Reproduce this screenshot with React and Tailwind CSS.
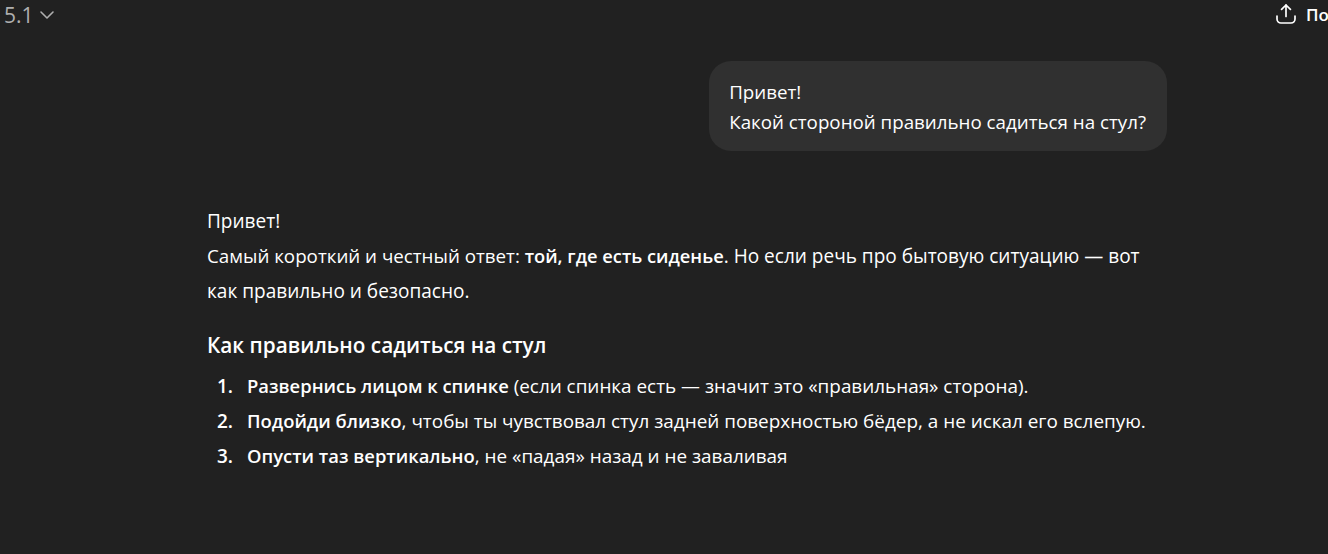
import React from 'react';
import { ChevronDown } from 'lucide-react';

const font = "font-['Open_Sans','Noto_Sans',sans-serif]";

const ShareIcon = () => (
  <svg className="mb-[3px]" width="20" height="20" viewBox="0 0 20 20" fill="none" stroke="currentColor" strokeWidth="1.7" strokeLinecap="round" strokeLinejoin="round">
    <path d="M10 12.5V1.2" />
    <path d="M5.6 5.4 10 1l4.4 4.4" />
    <path d="M1 12v3a4 4 0 0 0 4 4h10a4 4 0 0 0 4-4v-3" />
  </svg>
);

const steps = [
  ['Развернись лицом к спинке', ' (если спинка есть — значит это «правильная» сторона).'],
  ['Подойди близко', ', чтобы ты чувствовал стул задней поверхностью бёдер, а не искал его вслепую.'],
  ['Опусти таз вертикально', ', не «падая» назад и не заваливая'],
];

export default function App() {
  return (
    <div className={`w-[1328px] h-[554px] overflow-hidden bg-[#212121] text-white ${font}`}>
      {/* Top bar */}
      <header className="h-[30px] flex items-center justify-between pl-[4px] -mr-[30px]">
        <div className="flex items-center gap-[1px] text-[#afafaf]">
          <span className="text-[21px] leading-[28px]">5.1</span>
          <ChevronDown size={24} strokeWidth={1.6} />
        </div>
        <div className="flex items-center gap-[10px]">
          <ShareIcon />
          <span className="text-[17px] font-semibold leading-[28px] w-[52px] whitespace-nowrap">Поделиться</span>
        </div>
      </header>

      <main className="w-[960px] ml-[207px] pt-[31px]">
        {/* User message */}
        <div className="flex justify-end">
          <div className="bg-[#303030] rounded-[22px] pl-[20px] pr-[21px] pt-[16px] pb-[14px] text-[18.75px] leading-[30px]">
            <p>Привет!</p>
            <p>Какой стороной правильно садиться на стул?</p>
          </div>
        </div>

        {/* Assistant message */}
        <div className="mt-[53px] text-[19.05px] leading-[35px]">
          <p>Привет!</p>
          <p>
            <span className="text-[18.75px] leading-none">Самый короткий и честный ответ: </span>
            <strong className="font-semibold text-[18.3px] leading-none">той, где есть сиденье</strong>. Но если речь про бытовую ситуацию — вот как правильно и безопасно.
          </p>
          <h3 className="mt-[19px] text-[20.75px] leading-[35px] font-semibold">Как правильно садиться на стул</h3>
          <ol className="mt-[6px] text-[18.9px]">
            {steps.map(([bold, rest], i) => (
              <li key={i} className="flex items-baseline h-[35px]">
                <span className="w-[40px] pl-[10px] shrink-0 font-semibold">{i + 1}.</span>
                <span><strong className="font-semibold text-[18.4px] leading-none">{bold}</strong>{rest}</span>
              </li>
            ))}
          </ol>
        </div>
      </main>
    </div>
  );
}
